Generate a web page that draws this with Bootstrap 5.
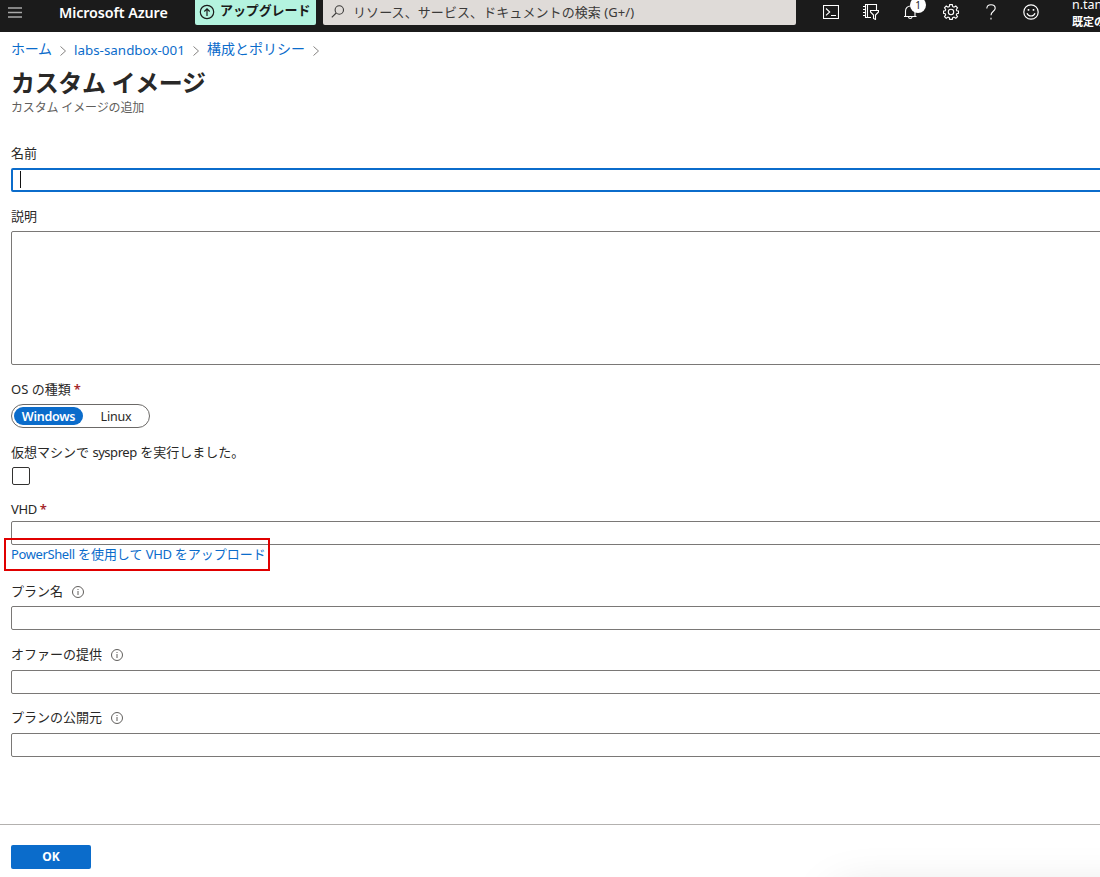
<!DOCTYPE html>
<html lang="ja">
<head>
<meta charset="utf-8">
<meta name="viewport" content="width=device-width, initial-scale=1">
<title>カスタム イメージ - Microsoft Azure</title>
<link href="https://cdn.jsdelivr.net/npm/bootstrap@5.3.0/dist/css/bootstrap.min.css" rel="stylesheet">
<style>
  body { font-family: "Noto Sans", "Noto Sans CJK JP", sans-serif; font-size: 13px; line-height: 18px; color: #292827; height: 877px; overflow: hidden; }
  a { color: #0b6ccb; text-decoration: none; }
  svg { display: block; flex: none; fill: none; stroke: currentColor; }
  .topbar { height: 32px; background: #1b1b1b; color: #fff; }
  .topbar > * { flex: none; }
  .burger { margin: 7px 0 0 8px; color: #a9a9a9; }
  .brand { margin: 4px 0 0 37px; width: 136px; font-size: 14.3px; font-weight: 600; letter-spacing: -.08px; }
  .upgrade { width: 121px; height: 25px; background: #b4f3df; color: #1b1b1b; font-weight: 700; border-radius: 0 0 2px 2px; }
  .upgrade span { margin: 1px 0 0 5px; letter-spacing: -.1px; }
  .search { width: 473px; height: 25px; margin-left: 7px; background: #dfdbd8; color: #3b3a39; border-radius: 0 0 2px 2px; }
  .search > svg { margin: 5px 0 0 8px; }
  .search > span { margin: 3px 0 0 8px; letter-spacing: .08px; }
  .tools { margin: 4px 0 0 27px; gap: 24px; }
  .count { position: absolute; left: 7px; top: -7px; width: 16px; height: 16px; border-radius: 50%; background: #fff; color: #1b1b1b; font-size: 10px; line-height: 16px; text-align: center; }
  .account { margin: -4px 0 0 33px; width: 28px; overflow: hidden; white-space: nowrap; font-size: 12.5px; line-height: 17px; }
  .account strong { font-size: 11px; line-height: 16px; }
  .crumbs { height: 18px; margin-top: 9px; font-size: 14px; color: #858381; }
  .crumbs svg { margin-top: 2px; }
  .crumbs a { position: relative; top: -1px; }
  .crumbs a.latin { top: 0; }
  h1 { font-size: 24px; line-height: 32px; font-weight: 700; margin: 8px 0 0; letter-spacing: -.35px; }
  .subtitle { font-size: 12px; line-height: 16px; color: #605e5c; position: relative; top: 1px; letter-spacing: -.15px; }
  .lbl { display: flex; align-items: center; height: 18px; white-space: pre; }
  .lbl svg { color: #605e5c; margin: 2px 0 0 9px; }
  .star { color: #a4262c; font-weight: 600; margin-left: 3px; }
  .content { padding-left: 11px; }
  .field { margin-right: -3px; border: 1px solid #7a7876; border-radius: 2px; height: 24px; background: #fff; }
  .field.active { border: 2px solid #0b6ccb; padding: 1px 0 0 6px; }
  .caret { width: 1px; height: 17px; background: #111; margin-left: 1px; }
  .pill { width: 139px; height: 24px; border: 1px solid #6b6967; border-radius: 12px; padding: 2px; }
  .pill span { flex: none; font-size: 12.5px; line-height: 19px; height: 18px; text-align: center; }
  .pill .on { width: 69px; background: #0b6ccb; color: #fff; border-radius: 9px; font-weight: 600; letter-spacing: -.25px; }
  .pill .off { width: 64px; padding-left: 2px; letter-spacing: -.2px; }
  .check { width: 18px; height: 18px; border: 1px solid #323130; border-radius: 2px; margin-left: 1px; }
  .upload { width: 266px; height: 33px; margin: -7px 0 0 -7px; border: 2px solid #e00000; padding: 5px 0 0 5px; white-space: nowrap; position: relative; letter-spacing: -.03px; }
  footer { border-top: 1px solid #b3b1af; height: 53px; padding: 20px 0 0 11px; overflow: hidden; position: relative; }
  .btn-ok { width: 80px; height: 24px; border-radius: 2px; background: #0b6ccb; color: #fff; font-size: 12px; font-weight: 700; padding: 0; line-height: 24px; border: 0; }
  .haze { position: absolute; left: 838px; top: 71px; width: 400px; height: 60px; box-shadow: 0 0 50px rgba(0,0,0,.17); }
</style>
</head>
<body class="bg-white d-flex flex-column">
<header class="topbar d-flex align-items-start">
  <svg class="burger" width="14" height="12" stroke-width="1.6"><path d="M0 1h14M0 5.500h14M0 10h14"/></svg>
  <div class="brand text-nowrap">Microsoft Azure</div>
  <div class="upgrade d-flex">
    <svg class="ms-1 mt-1" width="16" height="16" stroke-width="1.2"><circle cx="8" cy="8" r="6.700"/><path d="M8 12V5M5.300 7.500 8 4.800l2.700 2.700"/></svg>
    <span class="text-nowrap">アップグレード</span>
  </div>
  <div class="search d-flex">
    <svg width="14" height="14" stroke-width="1.1"><circle cx="8.300" cy="5" r="4.200"/><path d="M5.200 8 .8 12.400"/></svg>
    <span class="text-nowrap">リソース、サービス、ドキュメントの検索 (G+/)</span>
  </div>
  <div class="tools d-flex">
    <svg width="16" height="16" stroke-width="1.1"><path d="M.5 1.500h15v13H.5zM3 4.500 6.700 8 3 11.300M8 11.500h5"/></svg>
    <svg width="16" height="16" stroke-width="1.1"><path d="M13.500 6V.5H2.500v13H8M4.500.5v13M2.500 2.500H0M2.500 5.500H0M2.500 8.500H0M2.500 11.500H0M7.500 6.500h8v1.500l-3 3v4.500l-2-1V11l-3-3z"/></svg>
    <div class="position-relative"><svg width="16" height="16" stroke-width="1.1"><path d="M2.500 12.500V7c0-3 2.200-5 5-5s4.500 2 4.500 5v5.500M1 12.500h12.500M5.500 13c.2 2 3.300 2 3.500 0"/></svg><span class="count">1</span></div>
    <svg width="16" height="16" stroke-width="1.1"><path d="M6.700.6h2.600l.4 2 1.300.6 1.800-1.200 1.700 1.800L13.300 5.500l.5 1.200 1.700.3v2.300l-1.700.4-.5 1.200 1.200 1.700-1.700 1.700-1.800-1.200-1.300.6-.4 1.700H6.700l-.4-1.700-1.300-.6-1.800 1.200-1.700-1.700 1.200-1.700-.5-1.200L.5 9.300V7l1.700-.3.5-1.200L1.500 3.800 3.200 2 5 3.200l1.300-.6z"/><circle cx="8" cy="8" r="2.700"/></svg>
    <svg width="16" height="16" stroke-width="1.1"><path d="M3.800 4.400C3.900 2 5.600.7 8 .7s4.200 1.300 4.200 3.500C12.200 7.300 8 7.300 8 11.300M8 13.800v1.700"/></svg>
    <svg width="16" height="16" stroke-width="1.2"><circle cx="8" cy="8" r="7.200"/><path d="M4 9.300c1.300 3.600 6.700 3.600 8 0"/><path d="M5.500 5v1.800M10.500 5v1.800" stroke-width="1.6"/></svg>
  </div>
  <div class="account">n.tanaka<br><strong>既定のディレクトリ</strong></div>
</header>
<main class="content flex-grow-1">
  <nav class="crumbs d-flex align-items-center text-nowrap">
    <a href="#" style="width:48px;letter-spacing:-.3px">ホーム</a>
    <svg width="8" height="10"><path d="M1.500.5 6.500 5l-5 4.500"/></svg>
    <a href="#" class="latin" style="margin-left:7px;width:118px;font-size:13.400px">labs-sandbox-001</a>
    <svg width="8" height="10"><path d="M1.500.5 6.500 5l-5 4.500"/></svg>
    <a href="#" style="margin-left:7px;width:105px">構成とポリシー</a>
    <svg width="8" height="10"><path d="M1.500.5 6.500 5l-5 4.500"/></svg>
  </nav>
  <h1>カスタム イメージ</h1>
  <div class="subtitle">カスタム イメージの追加</div>
  <div class="lbl" style="margin-top:29px">名前</div>
  <div class="field active" style="margin-top:6px"><div class="caret"></div></div>
  <div class="lbl" style="margin-top:15px">説明</div>
  <div class="field" style="margin-top:6px;height:134px"></div>
  <div class="lbl" style="margin-top:15px"><span>OS の種類</span><span class="star">*</span></div>
  <div class="pill d-flex" style="margin-top:6px"><span class="on">Windows</span><span class="off">Linux</span></div>
  <div class="lbl" style="margin-top:15px">仮想マシンで <span style="letter-spacing:-.45px">sysprep</span> を実行しました。</div>
  <div class="check" style="margin-top:6px"></div>
  <div class="lbl" style="margin-top:15px"><span style="letter-spacing:-.4px">VHD</span><span class="star">*</span></div>
  <div class="field" style="margin-top:3px"></div>
  <div class="upload"><a href="#" class="d-block"><span style="letter-spacing:-.4px">PowerShell</span> を使用して <span style="letter-spacing:-.4px">VHD</span> をアップロード</a></div>
  <div class="lbl" style="margin-top:11px">プラン名<svg width="12" height="12"><circle cx="6" cy="6" r="5.500"/><path d="M6 5v4M6 3v1"/></svg></div>
  <div class="field" style="margin-top:6px"></div>
  <div class="lbl" style="margin-top:15px">オファーの提供<svg width="12" height="12"><circle cx="6" cy="6" r="5.500"/><path d="M6 5v4M6 3v1"/></svg></div>
  <div class="field" style="margin-top:7px"></div>
  <div class="lbl" style="margin-top:14px">プランの公開元<svg width="12" height="12"><circle cx="6" cy="6" r="5.500"/><path d="M6 5v4M6 3v1"/></svg></div>
  <div class="field" style="margin-top:7px"></div>
</main>
<footer><button class="btn btn-ok d-block" type="button">OK</button><div class="haze"></div></footer>
<script src="https://cdn.jsdelivr.net/npm/bootstrap@5.3.0/dist/js/bootstrap.bundle.min.js"></script>
</body>
</html>
